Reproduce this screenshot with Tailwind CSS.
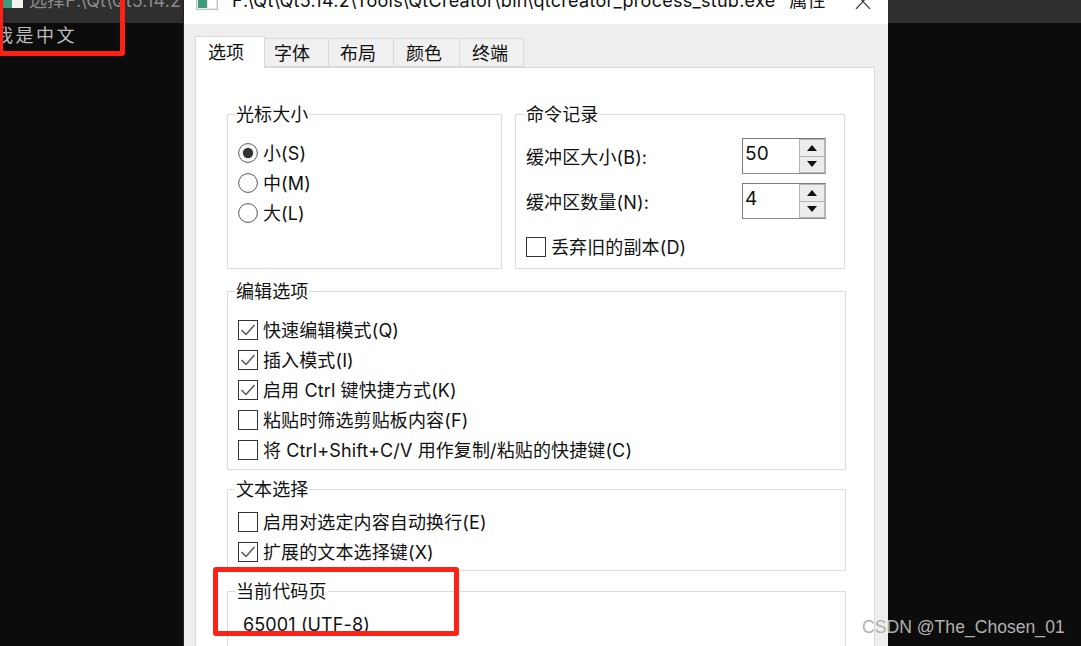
<!DOCTYPE html>
<html lang="zh-CN">
<head>
<meta charset="UTF-8">
<title>qtcreator_process_stub.exe 属性</title>
<script src="https://cdn.jsdelivr.net/npm/@tailwindcss/browser@4"></script>
</head>
<body class="bg-[#0c0c0c]">
<div class="relative flex h-[646px] w-[1081px] overflow-hidden font-['Inter','Noto_Sans_CJK_SC',sans-serif] text-[18px] leading-[24px] tracking-[0.12px] text-[#111]">

  <!-- console left -->
  <div class="w-[184px] shrink-0 overflow-hidden border-r border-[#222] bg-[#0c0c0c]">
    <div class="flex h-[23px] items-start gap-[6px] overflow-hidden bg-[#2f2f2f] pl-[3px]">
      <svg class="-mt-[8px] shrink-0" width="20" height="16" viewBox="0 0 20 16"><rect width="20" height="16" fill="#f2f2f2"/><rect x="0" y="8" width="9" height="8" fill="#3f9a78"/></svg>
      <span class="-mt-[11px] whitespace-nowrap text-[18px] text-[#8a8a8a]">选择F:\Qt\Qt5.14.2\Tools</span>
    </div>
    <p class="-ml-[5px] whitespace-nowrap font-['Noto_Sans_CJK_SC',sans-serif] text-[18px] leading-[22px] tracking-[2.5px] text-[#bdbdbd]">我是中文</p>
  </div>

  <!-- dialog -->
  <div class="w-[704px] shrink-0 bg-[#eeeeee]">
    <div class="flex h-[24px] items-start overflow-hidden bg-white pl-[12px]">
      <svg class="-mt-[10px] shrink-0" width="22" height="20" viewBox="0 0 22 20"><rect width="22" height="20" fill="#e4e8e8" stroke="#9aa0a0"/><rect x="2" y="2" width="9" height="16" fill="#3f9a78"/><rect x="12" y="10" width="8" height="8" fill="#fff"/></svg>
      <span class="-mt-[11px] ml-[14px] whitespace-nowrap text-[18px] tracking-[0.27px]">F:\Qt\Qt5.14.2\Tools\QtCreator\bin\qtcreator_process_stub.exe" 属性</span>
      <svg class="ml-auto mr-[17px] -mt-[6px] shrink-0" width="16" height="15" viewBox="0 0 16 15"><path d="M1 0 15 15M15 0 1 15" fill="none" stroke="#333" stroke-width="1.1"/></svg>
    </div>

    <div class="px-[11px]">
      <!-- tabs -->
      <div class="flex h-[43px] items-end">
        <div class="relative z-10 -mb-px flex h-[32px] w-[70px] items-center border border-b-0 border-[#d9d9d9] bg-white pl-[12px]">选项</div>
        <div class="flex h-[29px] w-[64px] items-center border border-l-0 border-[#d9d9d9] bg-[#f0f0f0] pl-[9px] pt-[2px]">字体</div>
        <div class="flex h-[29px] w-[65px] items-center border border-l-0 border-[#d9d9d9] bg-[#f0f0f0] pl-[11px] pt-[2px]">布局</div>
        <div class="flex h-[29px] w-[66px] items-center border border-l-0 border-[#d9d9d9] bg-[#f0f0f0] pl-[12px] pt-[2px]">颜色</div>
        <div class="flex h-[29px] w-[64px] items-center border border-l-0 border-[#d9d9d9] bg-[#f0f0f0] pl-[12px] pt-[2px]">终端</div>
      </div>

      <!-- panel -->
      <div class="h-[600px] w-[680px] border border-[#d9d9d9] bg-white pl-[31px] pt-[34px]">
        <div class="grid w-[619px] grid-cols-[275px_330px] gap-x-[13px]">
          <fieldset class="h-[167px] border border-[#dcdcdc] pl-[7px]">
            <legend class="px-[1px] pt-[2px] leading-[22px]">光标大小</legend>
            <div class="mt-[15px] flex flex-col gap-[6px] pl-[3px]">
              <label class="flex h-[24px] items-center gap-[5px] pt-[2px] [&>svg]:-mt-[2px]">
                <svg width="20" height="20" viewBox="0 0 20 20"><circle cx="10" cy="10" r="9.4" fill="#fff" stroke="#555"/><circle cx="10" cy="10" r="5.2" fill="#333"/></svg>
                小(S)
              </label>
              <label class="flex h-[24px] items-center gap-[5px] pt-[2px] [&>svg]:-mt-[2px]">
                <svg width="20" height="20" viewBox="0 0 20 20"><circle cx="10" cy="10" r="9.4" fill="#fff" stroke="#555"/></svg>
                中(M)
              </label>
              <label class="flex h-[24px] items-center gap-[5px] pt-[2px] [&>svg]:-mt-[2px]">
                <svg width="20" height="20" viewBox="0 0 20 20"><circle cx="10" cy="10" r="9.4" fill="#fff" stroke="#555"/></svg>
                大(L)
              </label>
            </div>
          </fieldset>

          <fieldset class="h-[167px] border border-[#dcdcdc] pl-[9px]">
            <legend class="px-[1px] pt-[2px] leading-[22px]">命令记录</legend>
            <div class="mt-[12px] flex h-[36px] w-[301px] items-center justify-between">
              <span class="pl-px pt-[3px]">缓冲区大小(B):</span>
              <div class="flex h-[36px] w-[84px] items-stretch border border-[#7a7a7a] border-r-[#b5b5b5] border-b-[#8a8a8a]">
                <span class="flex-1 pl-[2px] pt-px text-[19px] leading-[28px]">50</span>
                <div class="flex w-[26px] flex-col gap-[1px] bg-[#b5b5b5] p-px">
                  <div class="flex flex-1 items-center justify-center bg-[#ececec]"><svg width="10" height="6" viewBox="0 0 10 6"><path d="M5 0 10 6H0z" fill="#111"/></svg></div>
                  <div class="flex flex-1 items-center justify-center bg-[#ececec]"><svg width="10" height="6" viewBox="0 0 10 6"><path d="M0 0H10L5 6z" fill="#111"/></svg></div>
                </div>
              </div>
            </div>
            <div class="mt-[9px] flex h-[36px] w-[301px] items-center justify-between">
              <span class="pl-px pt-[3px]">缓冲区数量(N):</span>
              <div class="flex h-[36px] w-[84px] items-stretch border border-[#7a7a7a] border-r-[#b5b5b5] border-b-[#8a8a8a]">
                <span class="flex-1 pl-[2px] pt-px text-[19px] leading-[28px]">4</span>
                <div class="flex w-[26px] flex-col gap-[1px] bg-[#b5b5b5] p-px">
                  <div class="flex flex-1 items-center justify-center bg-[#ececec]"><svg width="10" height="6" viewBox="0 0 10 6"><path d="M5 0 10 6H0z" fill="#111"/></svg></div>
                  <div class="flex flex-1 items-center justify-center bg-[#ececec]"><svg width="10" height="6" viewBox="0 0 10 6"><path d="M0 0H10L5 6z" fill="#111"/></svg></div>
                </div>
              </div>
            </div>
            <label class="ml-[1px] mt-[16px] flex h-[24px] items-center gap-[5px] pt-[2px] [&>svg]:-mt-[2px]">
              <svg width="20" height="20" viewBox="0 0 20 20"><rect x=".5" y=".5" width="19" height="19" fill="#fff" stroke="#333"/></svg>
              丢弃旧的副本(D)
            </label>
          </fieldset>
        </div>

        <fieldset class="mt-[10px] h-[191px] w-[619px] border border-[#dcdcdc] pl-[7px]">
          <legend class="px-[1px] pt-[2px] leading-[22px]">编辑选项</legend>
          <div class="mt-[15px] flex flex-col gap-[6px] pl-[3px]">
            <label class="flex h-[24px] items-center gap-[5px] pt-[2px] [&>svg]:-mt-[2px]">
              <svg width="20" height="20" viewBox="0 0 20 20"><rect x=".5" y=".5" width="19" height="19" fill="#fff" stroke="#333"/><path d="M3.5 10 8 14.5 16.5 5" fill="none" stroke="#555" stroke-width="1.5"/></svg>
              快速编辑模式(Q)
            </label>
            <label class="flex h-[24px] items-center gap-[5px] pt-[2px] [&>svg]:-mt-[2px]">
              <svg width="20" height="20" viewBox="0 0 20 20"><rect x=".5" y=".5" width="19" height="19" fill="#fff" stroke="#333"/><path d="M3.5 10 8 14.5 16.5 5" fill="none" stroke="#555" stroke-width="1.5"/></svg>
              插入模式(I)
            </label>
            <label class="flex h-[24px] items-center gap-[5px] pt-[2px] [&>svg]:-mt-[2px]">
              <svg width="20" height="20" viewBox="0 0 20 20"><rect x=".5" y=".5" width="19" height="19" fill="#fff" stroke="#333"/><path d="M3.5 10 8 14.5 16.5 5" fill="none" stroke="#555" stroke-width="1.5"/></svg>
              启用 Ctrl 键快捷方式(K)
            </label>
            <label class="flex h-[24px] items-center gap-[5px] pt-[2px] [&>svg]:-mt-[2px]">
              <svg width="20" height="20" viewBox="0 0 20 20"><rect x=".5" y=".5" width="19" height="19" fill="#fff" stroke="#333"/></svg>
              粘贴时筛选剪贴板内容(F)
            </label>
            <label class="flex h-[24px] items-center gap-[5px] pt-[2px] [&>svg]:-mt-[2px]">
              <svg width="20" height="20" viewBox="0 0 20 20"><rect x=".5" y=".5" width="19" height="19" fill="#fff" stroke="#333"/></svg>
              将 Ctrl+Shift+C/V 用作复制/粘贴的快捷键(C)
            </label>
          </div>
        </fieldset>

        <fieldset class="mt-[7px] h-[94px] w-[619px] border border-[#dcdcdc] pl-[7px]">
          <legend class="px-[1px] pt-[2px] leading-[22px]">文本选择</legend>
          <div class="mt-[9px] flex flex-col gap-[6px] pl-[3px]">
            <label class="flex h-[24px] items-center gap-[5px] pt-[2px] [&>svg]:-mt-[2px]">
              <svg width="20" height="20" viewBox="0 0 20 20"><rect x=".5" y=".5" width="19" height="19" fill="#fff" stroke="#333"/></svg>
              启用对选定内容自动换行(E)
            </label>
            <label class="flex h-[24px] items-center gap-[5px] pt-[2px] [&>svg]:-mt-[2px]">
              <svg width="20" height="20" viewBox="0 0 20 20"><rect x=".5" y=".5" width="19" height="19" fill="#fff" stroke="#333"/><path d="M3.5 10 8 14.5 16.5 5" fill="none" stroke="#555" stroke-width="1.5"/></svg>
              扩展的文本选择键(X)
            </label>
          </div>
        </fieldset>

        <fieldset class="mt-[8px] h-[100px] w-[619px] border border-[#dcdcdc] pl-[7px]">
          <legend class="px-[1px] pt-[2px] leading-[22px]">当前代码页</legend>
          <p class="ml-[8px] mt-[10px]">65001 (UTF-8)</p>
        </fieldset>
      </div>
    </div>
  </div>

  <!-- console right -->
  <div class="flex-1 bg-[#0c0c0c]">
    <div class="h-[23px] bg-[#2f2f2f]"></div>
  </div>

  <!-- red annotations + watermark -->
  <div class="absolute -left-[2px] -top-[6px] h-[62px] w-[127px] rounded-[3px] border-[5px] border-[#ff2016]"></div>
  <div class="absolute left-[213px] top-[567px] h-[69px] w-[246px] rounded-[3px] border-[5px] border-[#ff2016]"></div>
  <span class="absolute left-[862px] top-[615px] font-['Liberation_Sans',sans-serif] text-[17.6px] leading-[24px] tracking-normal text-[#b0b0b0]">CSDN @The_Chosen_01</span>
</div>
</body>
</html>
